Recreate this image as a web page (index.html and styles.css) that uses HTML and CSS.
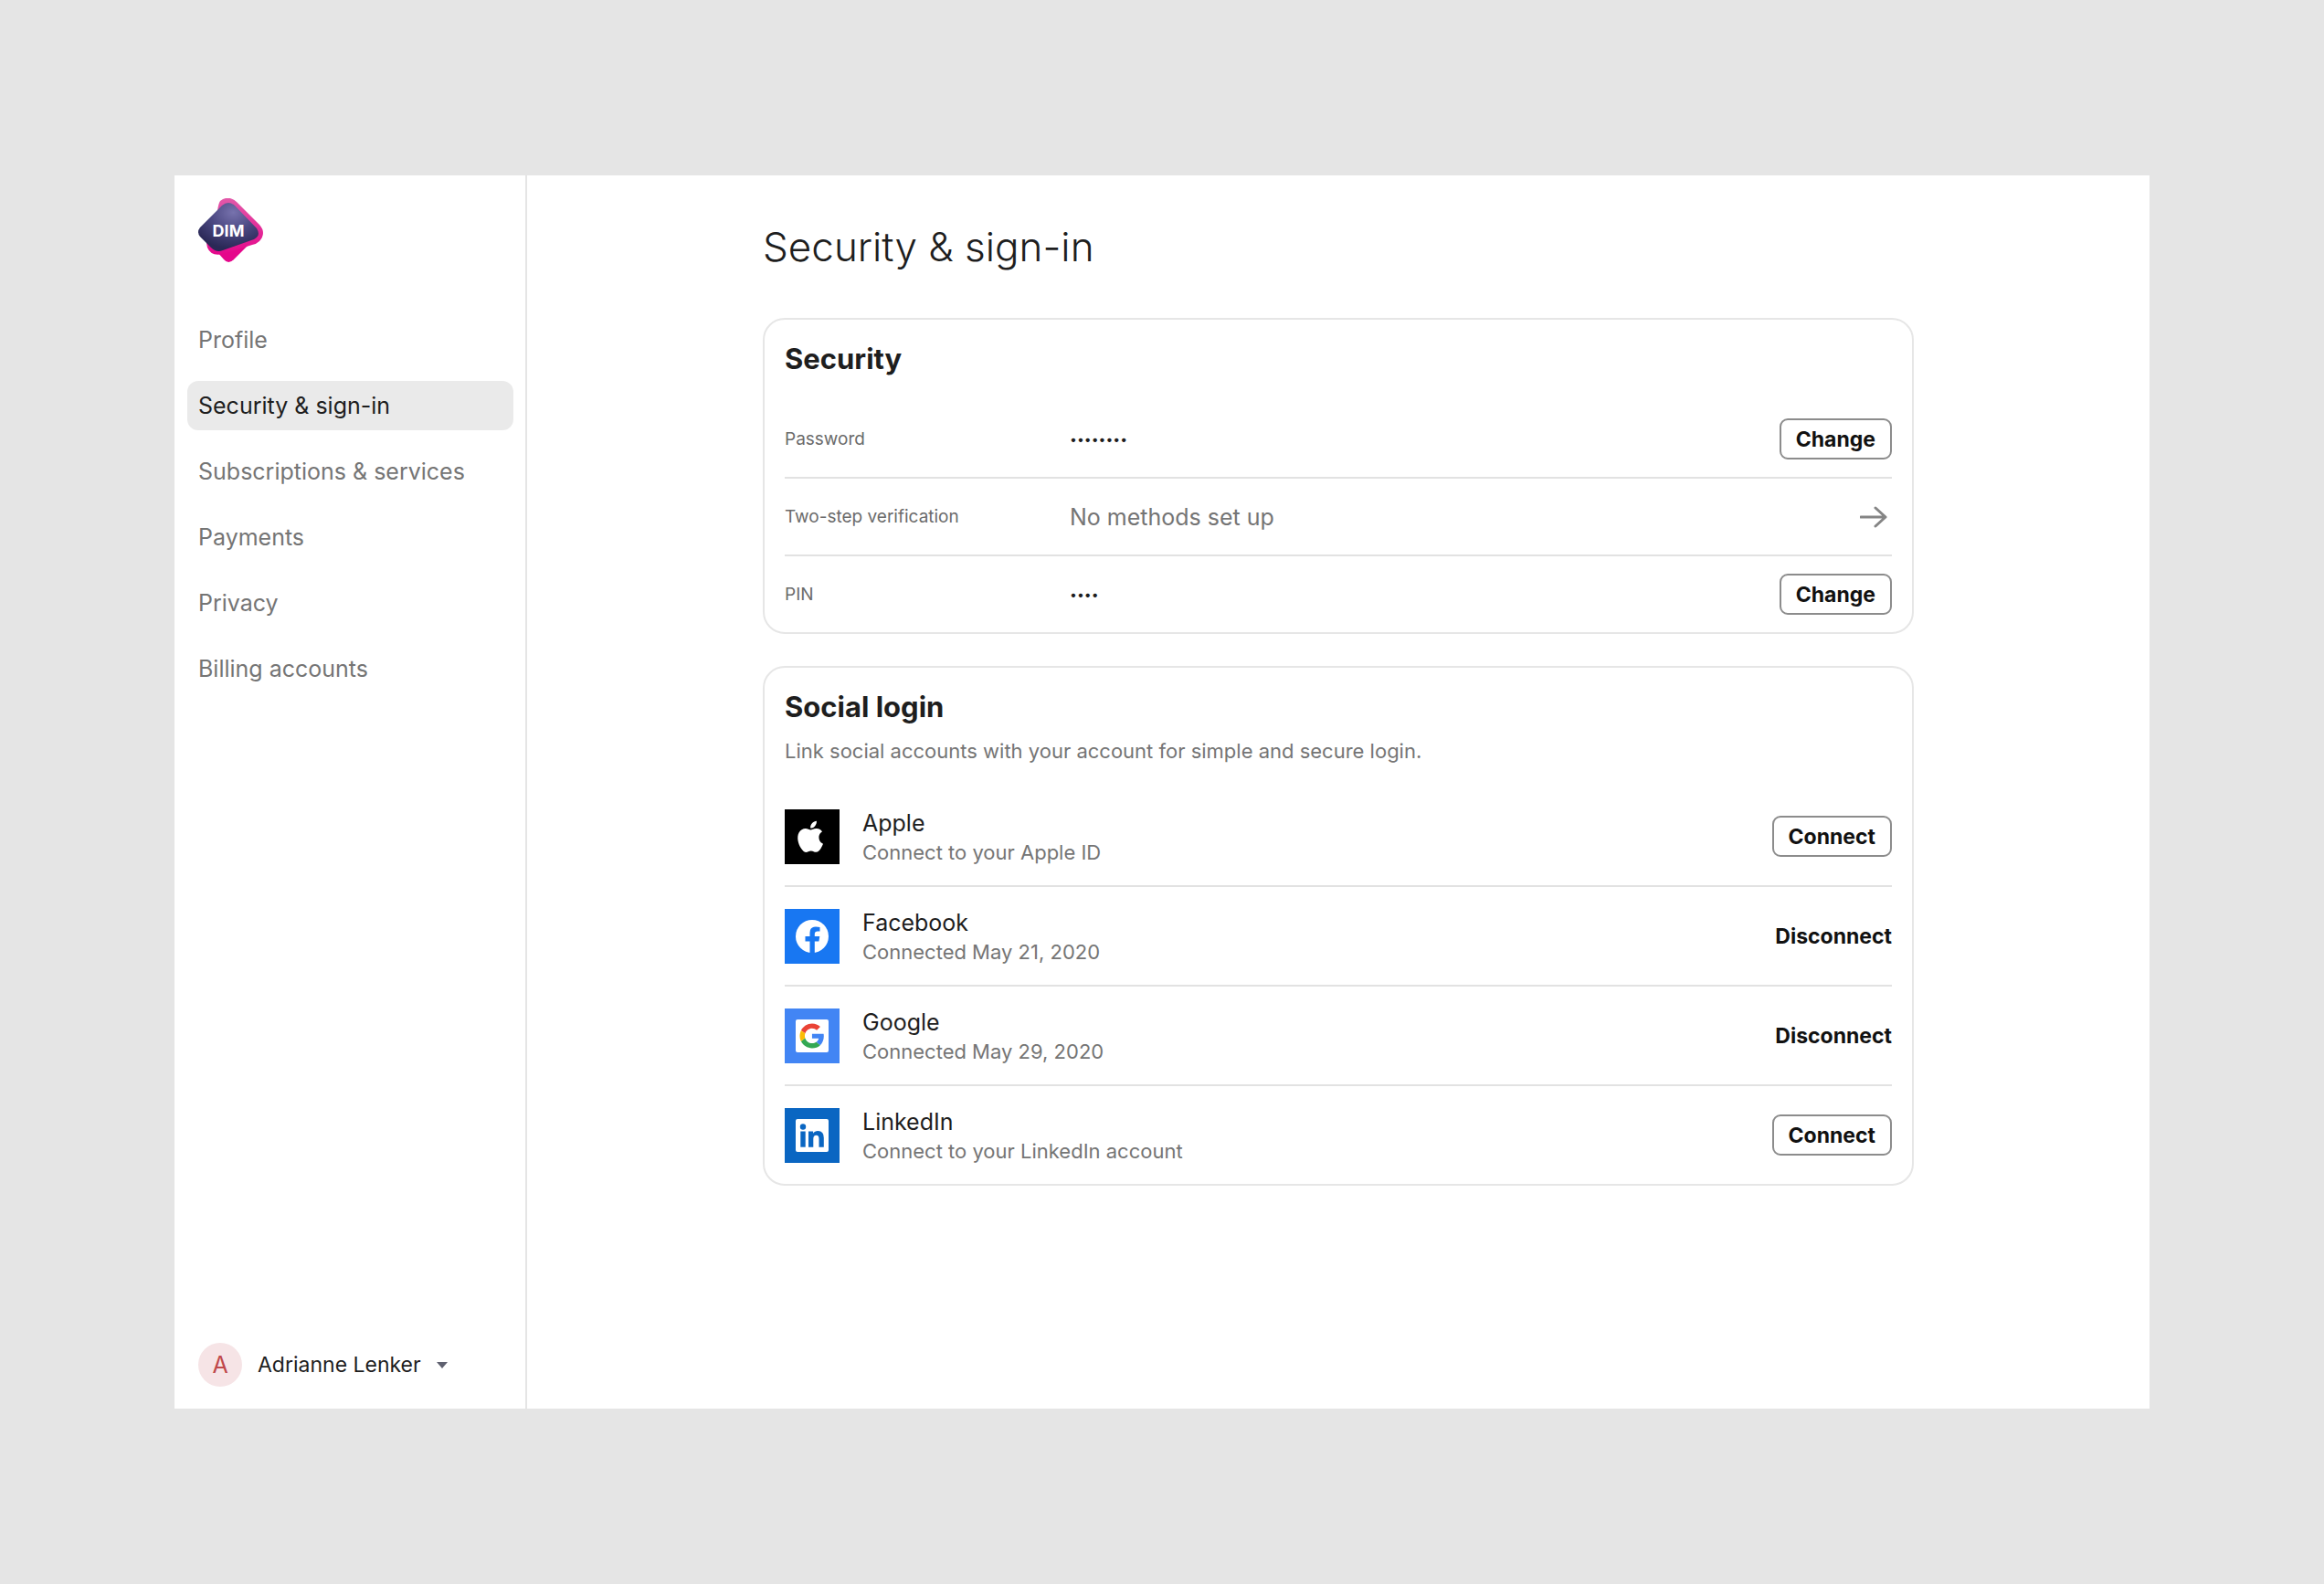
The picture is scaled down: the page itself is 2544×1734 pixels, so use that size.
FILE: index.html
```html
<!DOCTYPE html>
<html lang="en">
<head>
  <meta charset="UTF-8" />
  <meta name="viewport" content="width=device-width, initial-scale=1.0" />
  <title>Security &amp; sign-in</title>
  <link rel="stylesheet" href="styles.css">
</head>
<body>
  <div class="app">
    <aside class="sidebar">
      <a href="#" class="logo" aria-label="DIM">
        <svg width="72" height="72" viewBox="0 0 72 72">
          <defs>
            <linearGradient id="pink" x1="0" y1="0" x2="0" y2="1">
              <stop offset="0" stop-color="#e25aa9" />
              <stop offset="1" stop-color="#e5078b" />
            </linearGradient>
            <radialGradient id="navy" cx="0.58" cy="0.2" r="0.75">
              <stop offset="0" stop-color="#7772ad" />
              <stop offset="0.5" stop-color="#4c4983" />
              <stop offset="1" stop-color="#2a2856" />
            </radialGradient>
          </defs>
          <path d="M20 58 L28 67 Q33 73 39 67 L59 47 Z" fill="#e5078b" />
          <path d="M24 3 Q33 -4 42 4 L67 29 Q75 38 67 47 Q64 50 59 51 L27 61 Q14 64 10 54 L9 49 L21 14 Q22 6 24 3 Z" fill="url(#pink)" />
          <path d="M26 8 Q33 2 40 8 L64 33 Q69 41 61 45 L27 57 Q20 60 14 54 L2 42 Q-2 37 2 32 Z" fill="url(#navy)" />
          <text x="33" y="42" class="logo-text">DIM</text>
        </svg>
      </a>

      <nav class="menu">
        <a href="#">Profile</a>
        <a href="#" class="active">Security &amp; sign-in</a>
        <a href="#">Subscriptions &amp; services</a>
        <a href="#">Payments</a>
        <a href="#">Privacy</a>
        <a href="#">Billing accounts</a>
      </nav>

      <button class="user">
        <span class="avatar">A</span>
        <span>Adrianne Lenker</span>
        <svg width="12" height="7" viewBox="0 0 12 7"><path d="M0 0 H12 L6 7 Z" fill="#5f6170" /></svg>
      </button>
    </aside>

    <main class="content">
      <h1>Security &amp; sign-in</h1>

      <section class="card">
        <h2>Security</h2>
        <div class="rows">
          <div class="row">
            <span class="label">Password</span>
            <span class="dots">••••••••</span>
            <button class="btn">Change</button>
          </div>
          <div class="row">
            <span class="label">Two-step verification</span>
            <span class="value">No methods set up</span>
            <a href="#" class="arrow" aria-label="Set up two-step verification">
              <svg width="30" height="24" viewBox="0 0 30 24"><path d="M1 12 H28 M17 2 L28 12 L17 22" /></svg>
            </a>
          </div>
          <div class="row">
            <span class="label">PIN</span>
            <span class="dots">••••</span>
            <button class="btn">Change</button>
          </div>
        </div>
      </section>

      <section class="card">
        <h2>Social login</h2>
        <p class="intro">Link social accounts with your account for simple and secure login.</p>
        <div class="rows">
          <div class="row social">
            <svg class="tile" viewBox="0 0 60 60">
              <rect width="60" height="60" fill="#000" />
              <path transform="translate(10.500 11) scale(1.58)" fill="#fff" d="M17.050 12.540c-.03-2.720 2.220-4.030 2.320-4.090-1.270-1.850-3.240-2.110-3.940-2.130-1.670-.17-3.270.99-4.120.99-.86 0-2.170-.97-3.570-.94-1.820.03-3.510 1.070-4.450 2.700-1.910 3.320-.49 8.210 1.360 10.900.91 1.320 1.980 2.790 3.390 2.740 1.370-.06 1.880-.88 3.530-.88 1.640 0 2.110.88 3.550.85 1.470-.03 2.400-1.330 3.290-2.660 1.050-1.520 1.480-3.010 1.500-3.090-.03-.01-2.860-1.100-2.860-4.390zM14.340 4.550c.74-.91 1.250-2.160 1.110-3.420-1.070.05-2.380.72-3.150 1.620-.68.79-1.290 2.080-1.130 3.300 1.200.09 2.420-.61 3.170-1.500z" />
            </svg>
            <div class="account">
              <h3>Apple</h3>
              <p>Connect to your Apple ID</p>
            </div>
            <button class="btn">Connect</button>
          </div>
          <div class="row social">
            <svg class="tile" viewBox="0 0 60 60">
              <rect width="60" height="60" fill="#1877f2" />
              <circle cx="30" cy="30" r="18" fill="#fff" />
              <path fill="#1877f2" d="M27.500 49 V35.500 H22.500 V30 H27.500 V26 Q27.500 19.500 34 19.500 Q37 19.500 38.500 19.900 V24.600 H36 Q32.800 24.600 32.800 27.500 V30 H38.300 L37.400 35.500 H32.800 V49 Z" />
            </svg>
            <div class="account">
              <h3>Facebook</h3>
              <p>Connected May 21, 2020</p>
            </div>
            <button class="btn plain">Disconnect</button>
          </div>
          <div class="row social">
            <svg class="tile" viewBox="0 0 60 60">
              <rect width="60" height="60" fill="#4285f4" />
              <rect x="12" y="12" width="36" height="36" rx="2" fill="#fff" />
              <g transform="translate(16.500 16.500) scale(0.56)">
                <path fill="#ea4335" d="M24 9.500c3.540 0 6.710 1.220 9.210 3.600l6.850-6.850C35.900 2.380 30.470 0 24 0 14.620 0 6.510 5.380 2.560 13.220l7.980 6.190C12.430 13.720 17.740 9.500 24 9.500z" />
                <path fill="#4285f4" d="M46.980 24.550c0-1.570-.15-3.090-.38-4.550H24v9.020h12.940c-.58 2.960-2.260 5.480-4.780 7.180l7.730 6c4.510-4.180 7.090-10.360 7.090-17.650z" />
                <path fill="#fbbc05" d="M10.530 28.590c-.48-1.450-.76-2.990-.76-4.590s.27-3.140.76-4.590l-7.980-6.190C.92 16.460 0 20.120 0 24c0 3.880.92 7.540 2.560 10.780l7.970-6.190z" />
                <path fill="#34a853" d="M24 48c6.480 0 11.930-2.130 15.890-5.810l-7.730-6c-2.150 1.450-4.920 2.300-8.160 2.300-6.260 0-11.570-4.220-13.470-9.910l-7.980 6.190C6.510 42.620 14.620 48 24 48z" />
              </g>
            </svg>
            <div class="account">
              <h3>Google</h3>
              <p>Connected May 29, 2020</p>
            </div>
            <button class="btn plain">Disconnect</button>
          </div>
          <div class="row social">
            <svg class="tile" viewBox="0 0 60 60">
              <rect width="60" height="60" fill="#0a66c2" />
              <rect x="12" y="12" width="36" height="36" rx="2" fill="#fff" />
              <g fill="#0a66c2">
                <circle cx="20" cy="20.500" r="3.200" />
                <rect x="17.300" y="25.500" width="5.400" height="17.200" />
                <path d="M26 25.500 h5.100 v2.300 q1.700 -2.800 5.300 -2.800 q6.400 0 6.400 7.500 v10.200 h-5.300 v-9 q0 -4 -2.900 -4 q-3.300 0 -3.300 4.200 v8.800 h-5.300 z" />
              </g>
            </svg>
            <div class="account">
              <h3>LinkedIn</h3>
              <p>Connect to your LinkedIn account</p>
            </div>
            <button class="btn">Connect</button>
          </div>
        </div>
      </section>
    </main>
  </div>
</body>
</html>
```

FILE: styles.css
```css
* {
  box-sizing: border-box;
}
body {
  margin: 0;
  min-height: 100vh;
  padding: 192px 191px;
  display: flex;
  background: #e5e5e5;
  font-family: Inter, sans-serif;
  font-size: 25px;
  font-weight: 400;
  color: #1e1e1e;
}
h1, h2, h3, p {
  margin: 0;
}
a {
  color: inherit;
  text-decoration: none;
}
button {
  font-family: inherit;
  background: none;
  border: none;
  cursor: pointer;
}
.app {
  flex: 1;
  display: flex;
  background: #fff;
}

/* sidebar */
.sidebar {
  flex: 0 0 386px;
  display: flex;
  flex-direction: column;
  padding: 25px 13px 24px 14px;
  border-right: 2px solid #e5e5e5;
}
.logo {
  align-self: flex-start;
  margin-left: 12px;
}
.logo svg {
  display: block;
}
.logo-text {
  fill: #fff;
  font-size: 18px;
  font-weight: 700;
  text-anchor: middle;
}
.menu {
  display: flex;
  flex-direction: column;
  gap: 18px;
  margin-top: 56px;
}
.menu a {
  padding: 0 12px;
  line-height: 54px;
  border-radius: 12px;
  color: #757575;
}
.menu .active {
  background: #eaeaea;
  color: #1e1e1e;
}
.user {
  display: flex;
  align-items: center;
  gap: 17px;
  margin-top: auto;
  padding: 0 12px;
  font-size: 23px;
  color: #1e1e1e;
}
.avatar {
  width: 48px;
  line-height: 48px;
  border-radius: 50%;
  background: #f6e4e6;
  color: #c0494b;
  font-size: 25px;
}

/* content */
.content {
  flex: 1;
  display: flex;
  flex-direction: column;
  align-items: center;
  gap: 35px;
  padding: 48px 40px;
}
h1 {
  width: 100%;
  max-width: 1260px;
  margin-bottom: 13px;
  font-size: 44px;
  font-weight: 300;
  line-height: 60px;
}
.card {
  width: 100%;
  max-width: 1260px;
  padding: 22px 22px 0;
  border: 2px solid #e6e6e6;
  border-radius: 24px;
}
h2 {
  font-size: 31px;
  font-weight: 700;
  line-height: 42px;
}
.intro {
  margin-top: 12px;
  font-size: 22px;
  line-height: 30px;
  color: #757575;
}
.rows {
  margin-top: 25px;
}
.row {
  display: flex;
  align-items: center;
  height: 85px;
  border-bottom: 2px solid #e2e2e2;
}
.row.social {
  height: 109px;
}
.row:last-child {
  height: 83px;
  border-bottom: none;
}
.row.social:last-child {
  height: 107px;
}
.label {
  width: 312px;
  font-size: 19px;
  color: #6b6b6b;
}
.value {
  color: #757575;
}
.dots {
  font-size: 14px;
}
.btn {
  height: 45px;
  margin-left: auto;
  padding: 0 16px;
  border: 2px solid #8c8c8c;
  border-radius: 9px;
  font-size: 23px;
  font-weight: 700;
  color: #111;
}
.btn.plain {
  padding: 0;
  border: none;
}
.arrow {
  margin-left: auto;
  padding-right: 5px;
}
.arrow svg {
  display: block;
  fill: none;
  stroke: #858585;
  stroke-width: 3;
  stroke-linecap: round;
  stroke-linejoin: round;
}
.tile {
  width: 60px;
  height: 60px;
  margin-right: 25px;
}
.account {
  padding-top: 2px;
}
.account h3 {
  font-size: 25px;
  font-weight: 400;
  line-height: 32px;
}
.account p {
  font-size: 22px;
  line-height: 32px;
  color: #757575;
}
```
